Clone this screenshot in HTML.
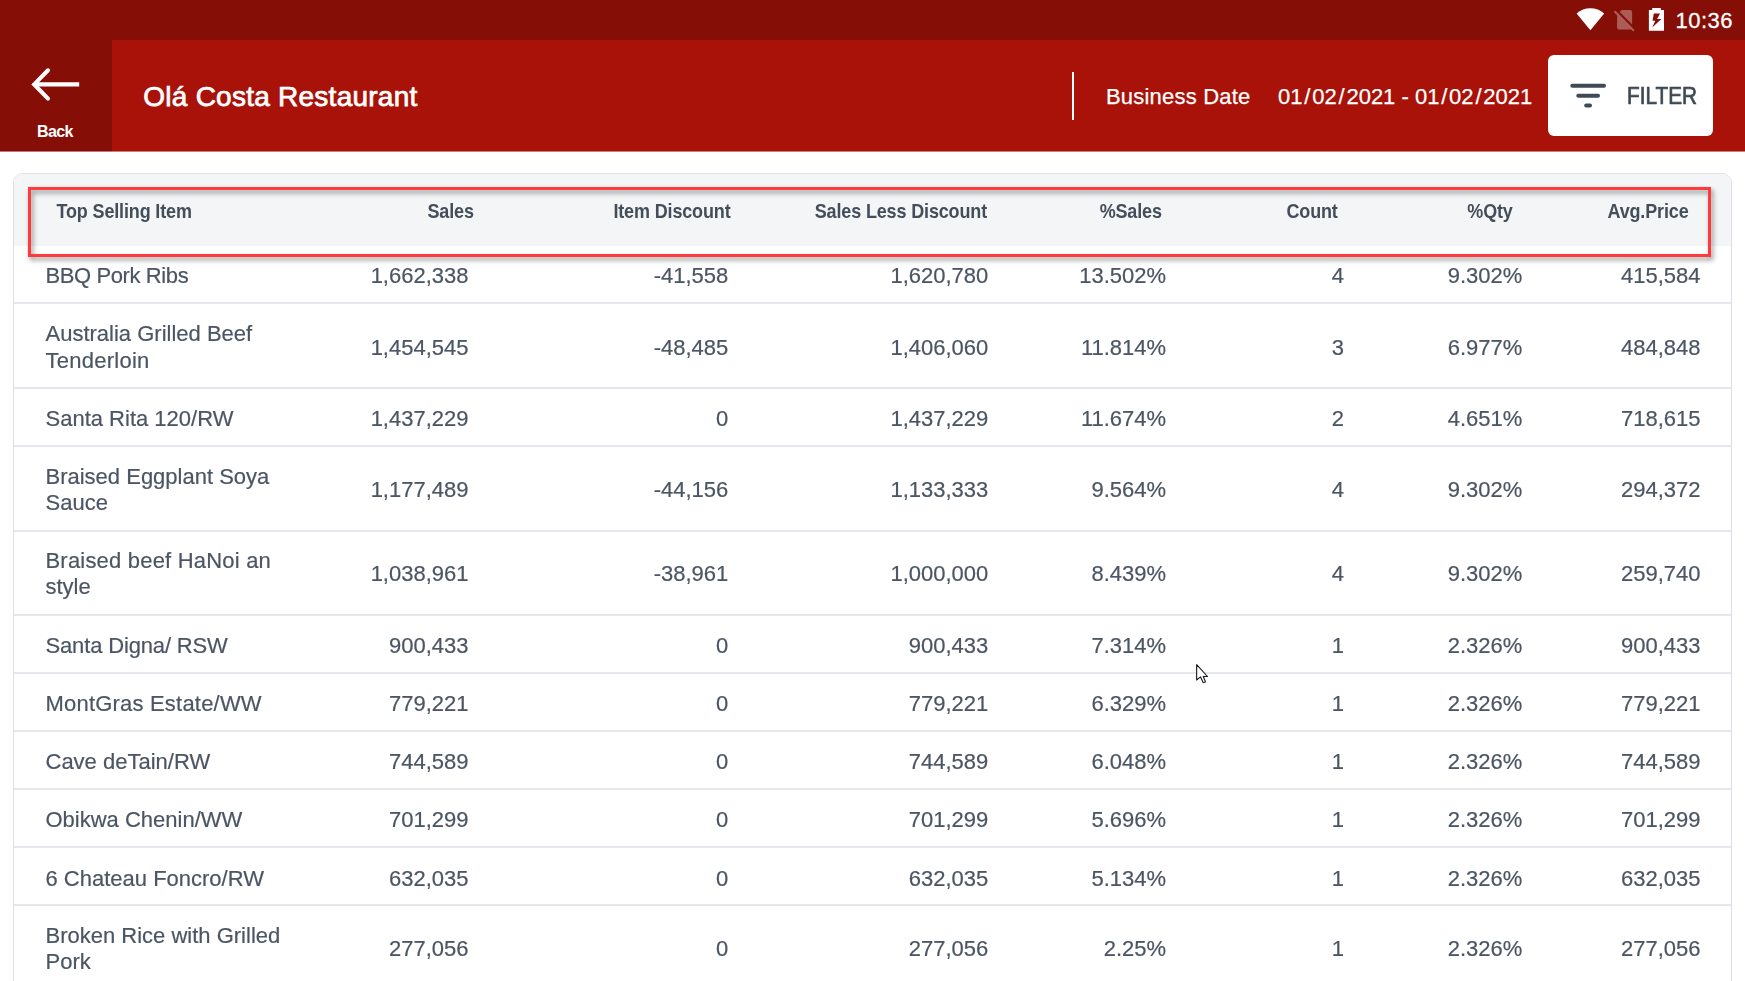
<!DOCTYPE html>
<html><head><meta charset="utf-8"><style>
html,body{margin:0;padding:0}
body{width:1745px;height:981px;position:relative;overflow:hidden;background:#fff;font-family:"Liberation Sans",sans-serif}
.t{position:absolute;white-space:nowrap}
.sl{margin:0 1.8px}
.h{transform:scaleY(1.1);transform-origin:0 15.24px}
.d{-webkit-text-stroke:0.2px #4b5563;transform:scaleY(1.03);transform-origin:0 18.6px}
</style></head><body>
<div style="position:absolute;left:0;top:0;width:1745px;height:40px;background:#850f06"></div>
<div style="position:absolute;left:0;top:40px;width:1745px;height:111px;background:#a81208"></div>
<div style="position:absolute;left:0;top:40px;width:112px;height:111px;background:#850f06"></div>
<div style="position:absolute;left:0;top:151px;width:1745px;height:1px;background:#a81208;opacity:0.55"></div>
<div style="position:absolute;left:0;top:151px;width:112px;height:1px;background:#fff"></div>
<div style="position:absolute;left:0;top:151px;width:112px;height:1px;background:#850f06;opacity:0.55"></div>
<svg style="position:absolute;left:0;top:0" width="112" height="152"><g stroke="#fff" stroke-width="4.1" fill="none"><path d="M35 84.4H79.2"/><path d="M48 70.3L34.2 84.4L48 98.6" stroke-linecap="round"/></g></svg>
<div class="t" style="left:35.0px;top:123.66px;font-size:16px;line-height:16px;font-weight:700;color:#fff;width:40px;text-align:center;letter-spacing:-0.6px;">Back</div>
<div class="t" style="left:143.3px;top:83.40px;font-size:28px;line-height:28px;font-weight:400;color:#fff;letter-spacing:0.25px;-webkit-text-stroke:0.75px #fff;">Ol&aacute; Costa Restaurant</div>
<div style="position:absolute;left:1072px;top:72px;width:2px;height:48px;background:#fff"></div>
<div class="t" style="left:1106.0px;top:85.98px;font-size:22px;line-height:22px;font-weight:400;color:#fff;letter-spacing:0.2px;-webkit-text-stroke:0.25px #fff;">Business Date</div>
<div class="t" style="left:1278.0px;top:85.98px;font-size:22px;line-height:22px;font-weight:400;color:#fff;-webkit-text-stroke:0.25px #fff;">01<span class="sl">/</span>02<span class="sl">/</span>2021 - 01<span class="sl">/</span>02<span class="sl">/</span>2021</div>
<div style="position:absolute;left:1548px;top:55px;width:165px;height:81px;background:#fff;border-radius:6px"></div>
<svg style="position:absolute;left:1560px;top:70px" width="60" height="50"><g stroke="#3f4a56" stroke-width="4" stroke-linecap="round"><path d="M12.3 15.8H44"/><path d="M18.3 25.8H38"/><path d="M26.2 35.6H30"/></g></svg>
<div class="t" style="left:1626.8px;top:84.18px;font-size:24px;line-height:24px;font-weight:400;color:#3d4853;transform:scaleX(0.865);transform-origin:0 0;-webkit-text-stroke:0.7px #3d4853;">FILTER</div>
<svg style="position:absolute;left:1570px;top:0" width="175" height="40"><path d="M6.6 13.45 A20.8 20.8 0 0 1 34.2 13.45 L20.4 30.3 Z" fill="#fff"/><g opacity="0.32"><path d="M51.7 10H60.1a2 2 0 0 1 2 2V27.6a2 2 0 0 1 -2 2H49.1a2 2 0 0 1 -2 -2V14.6Z" fill="#fff"/><path d="M46.5 10.2L65 29" stroke="#850f06" stroke-width="2.2"/><path d="M45 11.7L63.3 30.3" stroke="#fff" stroke-width="2" stroke-linecap="round"/></g><path d="M78.9 10h3.3v-2h8.6v2h3.2v20.8h-15.1z" fill="#fff"/><path d="M83.8 13.6H90L87.1 19H91.4L82.2 27.5L85.3 20.7H82.5Z" fill="#850f06"/></svg>
<div class="t" style="right:12.0px;top:10.18px;font-size:22px;line-height:22px;font-weight:400;color:#fff;text-align:right;letter-spacing:0.5px;-webkit-text-stroke:0.3px #fff;">10:36</div>
<div style="position:absolute;left:13px;top:173px;width:1717px;height:900px;border:1px solid #dce0e5;border-radius:10px;background:#fff;overflow:hidden"><div style="position:absolute;left:0;top:0;right:0;height:72px;background:#f3f5f7"></div></div>
<div class="t h" style="left:56.5px;top:202.56px;font-size:18px;line-height:18px;font-weight:700;color:#444e5a;letter-spacing:-0.15px;">Top Selling Item</div>
<div class="t h" style="right:1271.2px;top:202.56px;font-size:18px;line-height:18px;font-weight:700;color:#444e5a;text-align:right;letter-spacing:-0.15px;">Sales</div>
<div class="t h" style="right:1014.5px;top:202.56px;font-size:18px;line-height:18px;font-weight:700;color:#444e5a;text-align:right;letter-spacing:-0.15px;">Item Discount</div>
<div class="t h" style="right:758.0px;top:202.56px;font-size:18px;line-height:18px;font-weight:700;color:#444e5a;text-align:right;letter-spacing:-0.15px;">Sales Less Discount</div>
<div class="t h" style="right:583.2px;top:202.56px;font-size:18px;line-height:18px;font-weight:700;color:#444e5a;text-align:right;letter-spacing:-0.15px;">%Sales</div>
<div class="t h" style="right:407.3px;top:202.56px;font-size:18px;line-height:18px;font-weight:700;color:#444e5a;text-align:right;letter-spacing:-0.15px;">Count</div>
<div class="t h" style="right:232.3px;top:202.56px;font-size:18px;line-height:18px;font-weight:700;color:#444e5a;text-align:right;letter-spacing:-0.15px;">%Qty</div>
<div class="t h" style="right:56.5px;top:202.56px;font-size:18px;line-height:18px;font-weight:700;color:#444e5a;text-align:right;letter-spacing:-0.15px;">Avg.Price</div>
<div class="t d" style="left:45.5px;top:265.18px;font-size:22px;line-height:22px;font-weight:400;color:#4b5563;letter-spacing:-0.4px;">BBQ Pork Ribs</div>
<div class="t d" style="right:1276.5px;top:265.18px;font-size:22px;line-height:22px;font-weight:400;color:#4b5563;text-align:right;">1,662,338</div>
<div class="t d" style="right:1016.7px;top:265.18px;font-size:22px;line-height:22px;font-weight:400;color:#4b5563;text-align:right;">-41,558</div>
<div class="t d" style="right:756.7px;top:265.18px;font-size:22px;line-height:22px;font-weight:400;color:#4b5563;text-align:right;">1,620,780</div>
<div class="t d" style="right:578.9px;top:265.18px;font-size:22px;line-height:22px;font-weight:400;color:#4b5563;text-align:right;">13.502%</div>
<div class="t d" style="right:401.1px;top:265.18px;font-size:22px;line-height:22px;font-weight:400;color:#4b5563;text-align:right;">4</div>
<div class="t d" style="right:222.7px;top:265.18px;font-size:22px;line-height:22px;font-weight:400;color:#4b5563;text-align:right;">9.302%</div>
<div class="t d" style="right:44.5px;top:265.18px;font-size:22px;line-height:22px;font-weight:400;color:#4b5563;text-align:right;">415,584</div>
<div style="position:absolute;left:14px;top:302.0px;width:1717px;height:2px;background:#e4e7eb"></div>
<div class="t d" style="left:45.5px;top:322.98px;font-size:22px;line-height:22px;font-weight:400;color:#4b5563;">Australia Grilled Beef</div>
<div class="t d" style="left:45.5px;top:349.58px;font-size:22px;line-height:22px;font-weight:400;color:#4b5563;letter-spacing:0.25px;">Tenderloin</div>
<div class="t d" style="right:1276.5px;top:336.58px;font-size:22px;line-height:22px;font-weight:400;color:#4b5563;text-align:right;">1,454,545</div>
<div class="t d" style="right:1016.7px;top:336.58px;font-size:22px;line-height:22px;font-weight:400;color:#4b5563;text-align:right;">-48,485</div>
<div class="t d" style="right:756.7px;top:336.58px;font-size:22px;line-height:22px;font-weight:400;color:#4b5563;text-align:right;">1,406,060</div>
<div class="t d" style="right:578.9px;top:336.58px;font-size:22px;line-height:22px;font-weight:400;color:#4b5563;text-align:right;">11.814%</div>
<div class="t d" style="right:401.1px;top:336.58px;font-size:22px;line-height:22px;font-weight:400;color:#4b5563;text-align:right;">3</div>
<div class="t d" style="right:222.7px;top:336.58px;font-size:22px;line-height:22px;font-weight:400;color:#4b5563;text-align:right;">6.977%</div>
<div class="t d" style="right:44.5px;top:336.58px;font-size:22px;line-height:22px;font-weight:400;color:#4b5563;text-align:right;">484,848</div>
<div style="position:absolute;left:14px;top:387.0px;width:1717px;height:2px;background:#e4e7eb"></div>
<div class="t d" style="left:45.5px;top:408.08px;font-size:22px;line-height:22px;font-weight:400;color:#4b5563;">Santa Rita 120/RW</div>
<div class="t d" style="right:1276.5px;top:408.08px;font-size:22px;line-height:22px;font-weight:400;color:#4b5563;text-align:right;">1,437,229</div>
<div class="t d" style="right:1016.7px;top:408.08px;font-size:22px;line-height:22px;font-weight:400;color:#4b5563;text-align:right;">0</div>
<div class="t d" style="right:756.7px;top:408.08px;font-size:22px;line-height:22px;font-weight:400;color:#4b5563;text-align:right;">1,437,229</div>
<div class="t d" style="right:578.9px;top:408.08px;font-size:22px;line-height:22px;font-weight:400;color:#4b5563;text-align:right;">11.674%</div>
<div class="t d" style="right:401.1px;top:408.08px;font-size:22px;line-height:22px;font-weight:400;color:#4b5563;text-align:right;">2</div>
<div class="t d" style="right:222.7px;top:408.08px;font-size:22px;line-height:22px;font-weight:400;color:#4b5563;text-align:right;">4.651%</div>
<div class="t d" style="right:44.5px;top:408.08px;font-size:22px;line-height:22px;font-weight:400;color:#4b5563;text-align:right;">718,615</div>
<div style="position:absolute;left:14px;top:445.0px;width:1717px;height:2px;background:#e4e7eb"></div>
<div class="t d" style="left:45.5px;top:465.58px;font-size:22px;line-height:22px;font-weight:400;color:#4b5563;">Braised Eggplant Soya</div>
<div class="t d" style="left:45.5px;top:492.18px;font-size:22px;line-height:22px;font-weight:400;color:#4b5563;">Sauce</div>
<div class="t d" style="right:1276.5px;top:479.18px;font-size:22px;line-height:22px;font-weight:400;color:#4b5563;text-align:right;">1,177,489</div>
<div class="t d" style="right:1016.7px;top:479.18px;font-size:22px;line-height:22px;font-weight:400;color:#4b5563;text-align:right;">-44,156</div>
<div class="t d" style="right:756.7px;top:479.18px;font-size:22px;line-height:22px;font-weight:400;color:#4b5563;text-align:right;">1,133,333</div>
<div class="t d" style="right:578.9px;top:479.18px;font-size:22px;line-height:22px;font-weight:400;color:#4b5563;text-align:right;">9.564%</div>
<div class="t d" style="right:401.1px;top:479.18px;font-size:22px;line-height:22px;font-weight:400;color:#4b5563;text-align:right;">4</div>
<div class="t d" style="right:222.7px;top:479.18px;font-size:22px;line-height:22px;font-weight:400;color:#4b5563;text-align:right;">9.302%</div>
<div class="t d" style="right:44.5px;top:479.18px;font-size:22px;line-height:22px;font-weight:400;color:#4b5563;text-align:right;">294,372</div>
<div style="position:absolute;left:14px;top:529.5px;width:1717px;height:2px;background:#e4e7eb"></div>
<div class="t d" style="left:45.5px;top:549.88px;font-size:22px;line-height:22px;font-weight:400;color:#4b5563;letter-spacing:0.2px;">Braised beef HaNoi an</div>
<div class="t d" style="left:45.5px;top:576.48px;font-size:22px;line-height:22px;font-weight:400;color:#4b5563;">style</div>
<div class="t d" style="right:1276.5px;top:563.48px;font-size:22px;line-height:22px;font-weight:400;color:#4b5563;text-align:right;">1,038,961</div>
<div class="t d" style="right:1016.7px;top:563.48px;font-size:22px;line-height:22px;font-weight:400;color:#4b5563;text-align:right;">-38,961</div>
<div class="t d" style="right:756.7px;top:563.48px;font-size:22px;line-height:22px;font-weight:400;color:#4b5563;text-align:right;">1,000,000</div>
<div class="t d" style="right:578.9px;top:563.48px;font-size:22px;line-height:22px;font-weight:400;color:#4b5563;text-align:right;">8.439%</div>
<div class="t d" style="right:401.1px;top:563.48px;font-size:22px;line-height:22px;font-weight:400;color:#4b5563;text-align:right;">4</div>
<div class="t d" style="right:222.7px;top:563.48px;font-size:22px;line-height:22px;font-weight:400;color:#4b5563;text-align:right;">9.302%</div>
<div class="t d" style="right:44.5px;top:563.48px;font-size:22px;line-height:22px;font-weight:400;color:#4b5563;text-align:right;">259,740</div>
<div style="position:absolute;left:14px;top:614.3px;width:1717px;height:2px;background:#e4e7eb"></div>
<div class="t d" style="left:45.5px;top:634.88px;font-size:22px;line-height:22px;font-weight:400;color:#4b5563;letter-spacing:-0.15px;">Santa Digna/ RSW</div>
<div class="t d" style="right:1276.5px;top:634.88px;font-size:22px;line-height:22px;font-weight:400;color:#4b5563;text-align:right;">900,433</div>
<div class="t d" style="right:1016.7px;top:634.88px;font-size:22px;line-height:22px;font-weight:400;color:#4b5563;text-align:right;">0</div>
<div class="t d" style="right:756.7px;top:634.88px;font-size:22px;line-height:22px;font-weight:400;color:#4b5563;text-align:right;">900,433</div>
<div class="t d" style="right:578.9px;top:634.88px;font-size:22px;line-height:22px;font-weight:400;color:#4b5563;text-align:right;">7.314%</div>
<div class="t d" style="right:401.1px;top:634.88px;font-size:22px;line-height:22px;font-weight:400;color:#4b5563;text-align:right;">1</div>
<div class="t d" style="right:222.7px;top:634.88px;font-size:22px;line-height:22px;font-weight:400;color:#4b5563;text-align:right;">2.326%</div>
<div class="t d" style="right:44.5px;top:634.88px;font-size:22px;line-height:22px;font-weight:400;color:#4b5563;text-align:right;">900,433</div>
<div style="position:absolute;left:14px;top:672.0px;width:1717px;height:2px;background:#e4e7eb"></div>
<div class="t d" style="left:45.5px;top:693.08px;font-size:22px;line-height:22px;font-weight:400;color:#4b5563;letter-spacing:0.2px;">MontGras Estate/WW</div>
<div class="t d" style="right:1276.5px;top:693.08px;font-size:22px;line-height:22px;font-weight:400;color:#4b5563;text-align:right;">779,221</div>
<div class="t d" style="right:1016.7px;top:693.08px;font-size:22px;line-height:22px;font-weight:400;color:#4b5563;text-align:right;">0</div>
<div class="t d" style="right:756.7px;top:693.08px;font-size:22px;line-height:22px;font-weight:400;color:#4b5563;text-align:right;">779,221</div>
<div class="t d" style="right:578.9px;top:693.08px;font-size:22px;line-height:22px;font-weight:400;color:#4b5563;text-align:right;">6.329%</div>
<div class="t d" style="right:401.1px;top:693.08px;font-size:22px;line-height:22px;font-weight:400;color:#4b5563;text-align:right;">1</div>
<div class="t d" style="right:222.7px;top:693.08px;font-size:22px;line-height:22px;font-weight:400;color:#4b5563;text-align:right;">2.326%</div>
<div class="t d" style="right:44.5px;top:693.08px;font-size:22px;line-height:22px;font-weight:400;color:#4b5563;text-align:right;">779,221</div>
<div style="position:absolute;left:14px;top:730.0px;width:1717px;height:2px;background:#e4e7eb"></div>
<div class="t d" style="left:45.5px;top:751.08px;font-size:22px;line-height:22px;font-weight:400;color:#4b5563;">Cave deTain/RW</div>
<div class="t d" style="right:1276.5px;top:751.08px;font-size:22px;line-height:22px;font-weight:400;color:#4b5563;text-align:right;">744,589</div>
<div class="t d" style="right:1016.7px;top:751.08px;font-size:22px;line-height:22px;font-weight:400;color:#4b5563;text-align:right;">0</div>
<div class="t d" style="right:756.7px;top:751.08px;font-size:22px;line-height:22px;font-weight:400;color:#4b5563;text-align:right;">744,589</div>
<div class="t d" style="right:578.9px;top:751.08px;font-size:22px;line-height:22px;font-weight:400;color:#4b5563;text-align:right;">6.048%</div>
<div class="t d" style="right:401.1px;top:751.08px;font-size:22px;line-height:22px;font-weight:400;color:#4b5563;text-align:right;">1</div>
<div class="t d" style="right:222.7px;top:751.08px;font-size:22px;line-height:22px;font-weight:400;color:#4b5563;text-align:right;">2.326%</div>
<div class="t d" style="right:44.5px;top:751.08px;font-size:22px;line-height:22px;font-weight:400;color:#4b5563;text-align:right;">744,589</div>
<div style="position:absolute;left:14px;top:788.3px;width:1717px;height:2px;background:#e4e7eb"></div>
<div class="t d" style="left:45.5px;top:809.38px;font-size:22px;line-height:22px;font-weight:400;color:#4b5563;">Obikwa Chenin/WW</div>
<div class="t d" style="right:1276.5px;top:809.38px;font-size:22px;line-height:22px;font-weight:400;color:#4b5563;text-align:right;">701,299</div>
<div class="t d" style="right:1016.7px;top:809.38px;font-size:22px;line-height:22px;font-weight:400;color:#4b5563;text-align:right;">0</div>
<div class="t d" style="right:756.7px;top:809.38px;font-size:22px;line-height:22px;font-weight:400;color:#4b5563;text-align:right;">701,299</div>
<div class="t d" style="right:578.9px;top:809.38px;font-size:22px;line-height:22px;font-weight:400;color:#4b5563;text-align:right;">5.696%</div>
<div class="t d" style="right:401.1px;top:809.38px;font-size:22px;line-height:22px;font-weight:400;color:#4b5563;text-align:right;">1</div>
<div class="t d" style="right:222.7px;top:809.38px;font-size:22px;line-height:22px;font-weight:400;color:#4b5563;text-align:right;">2.326%</div>
<div class="t d" style="right:44.5px;top:809.38px;font-size:22px;line-height:22px;font-weight:400;color:#4b5563;text-align:right;">701,299</div>
<div style="position:absolute;left:14px;top:846.0px;width:1717px;height:2px;background:#e4e7eb"></div>
<div class="t d" style="left:45.5px;top:867.58px;font-size:22px;line-height:22px;font-weight:400;color:#4b5563;">6 Chateau Foncro/RW</div>
<div class="t d" style="right:1276.5px;top:867.58px;font-size:22px;line-height:22px;font-weight:400;color:#4b5563;text-align:right;">632,035</div>
<div class="t d" style="right:1016.7px;top:867.58px;font-size:22px;line-height:22px;font-weight:400;color:#4b5563;text-align:right;">0</div>
<div class="t d" style="right:756.7px;top:867.58px;font-size:22px;line-height:22px;font-weight:400;color:#4b5563;text-align:right;">632,035</div>
<div class="t d" style="right:578.9px;top:867.58px;font-size:22px;line-height:22px;font-weight:400;color:#4b5563;text-align:right;">5.134%</div>
<div class="t d" style="right:401.1px;top:867.58px;font-size:22px;line-height:22px;font-weight:400;color:#4b5563;text-align:right;">1</div>
<div class="t d" style="right:222.7px;top:867.58px;font-size:22px;line-height:22px;font-weight:400;color:#4b5563;text-align:right;">2.326%</div>
<div class="t d" style="right:44.5px;top:867.58px;font-size:22px;line-height:22px;font-weight:400;color:#4b5563;text-align:right;">632,035</div>
<div style="position:absolute;left:14px;top:904.3px;width:1717px;height:2px;background:#e4e7eb"></div>
<div class="t d" style="left:45.5px;top:924.88px;font-size:22px;line-height:22px;font-weight:400;color:#4b5563;">Broken Rice with Grilled</div>
<div class="t d" style="left:45.5px;top:951.48px;font-size:22px;line-height:22px;font-weight:400;color:#4b5563;">Pork</div>
<div class="t d" style="right:1276.5px;top:938.48px;font-size:22px;line-height:22px;font-weight:400;color:#4b5563;text-align:right;">277,056</div>
<div class="t d" style="right:1016.7px;top:938.48px;font-size:22px;line-height:22px;font-weight:400;color:#4b5563;text-align:right;">0</div>
<div class="t d" style="right:756.7px;top:938.48px;font-size:22px;line-height:22px;font-weight:400;color:#4b5563;text-align:right;">277,056</div>
<div class="t d" style="right:578.9px;top:938.48px;font-size:22px;line-height:22px;font-weight:400;color:#4b5563;text-align:right;">2.25%</div>
<div class="t d" style="right:401.1px;top:938.48px;font-size:22px;line-height:22px;font-weight:400;color:#4b5563;text-align:right;">1</div>
<div class="t d" style="right:222.7px;top:938.48px;font-size:22px;line-height:22px;font-weight:400;color:#4b5563;text-align:right;">2.326%</div>
<div class="t d" style="right:44.5px;top:938.48px;font-size:22px;line-height:22px;font-weight:400;color:#4b5563;text-align:right;">277,056</div>
<div style="position:absolute;left:28px;top:187px;width:1677px;height:64px;border:3px solid #fe3b3c;filter:drop-shadow(2px 3.5px 2.5px rgba(0,0,0,0.45))"></div>
<svg style="position:absolute;left:1195px;top:663px" width="16" height="24"><path d="M1.65 1.7V17L5.5 13.9L8 19.3Q8.3 19.9 9 19.6L10 19.1Q10.6 18.8 10.3 18.2L8.2 13.5H12.5Z" fill="#fff" stroke="#141820" stroke-width="1.1" stroke-linejoin="round"/></svg>
</body></html>
